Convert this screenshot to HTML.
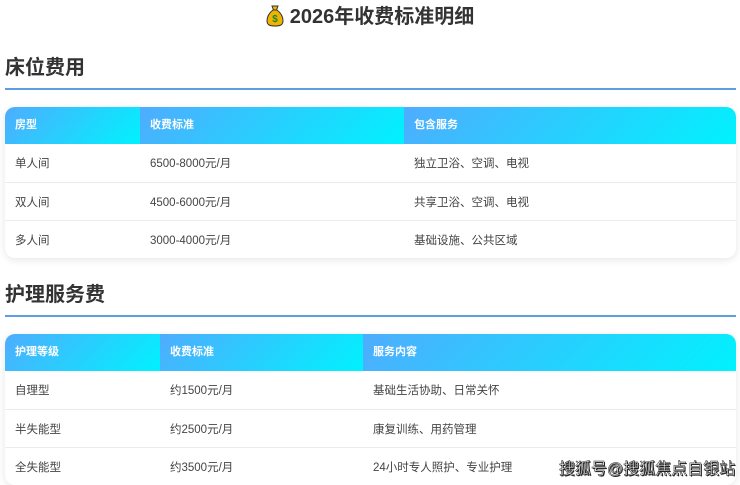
<!DOCTYPE html>
<html><head><meta charset="utf-8">
<style>
*{margin:0;padding:0;box-sizing:border-box}
body{width:740px;height:482px;overflow:hidden;background:#fff;font-family:"Liberation Sans","Noto Sans CJK SC",sans-serif;color:#333;position:relative}
.title{position:absolute;top:3px;left:0;width:740px;text-align:center;font-size:20px;font-weight:bold;color:#333;line-height:28px}
.title svg{vertical-align:-4px;margin-right:6px}
.h2{position:absolute;left:5px;font-size:20px;font-weight:bold;color:#333;line-height:28px}
.line{position:absolute;left:5px;width:731px;height:2px;background:#5b9fe2}
.tbl{position:absolute;left:5px;width:731px;border-radius:10px;overflow:hidden;box-shadow:0 2px 8px rgba(0,0,0,0.1);background:#fff}
.row{display:flex;height:38px;border-top:1px solid #ececf0;font-size:11.5px;align-items:center;color:#444}
.hdr{display:flex;height:37px;font-size:11px;font-weight:bold;color:#fff}
.hdr div{height:37px;line-height:37px;padding-left:10px;background:linear-gradient(135deg,#4facfe,#00f2fe)}
.row div{padding-left:10px}
.wm{position:absolute;left:559px;top:455px;font-size:16px;font-weight:normal;color:#fff;-webkit-text-stroke:0.5px #222;text-shadow:1px 1px 0 #222}
</style></head><body>
<div class="title"><svg width="18" height="22" viewBox="0 0 18 22"><path d="M6 1h6l-1.5 4h-3z" fill="#f0b400" stroke="#333" stroke-width="1"/><path d="M7 5h4c4 3 6 7 6 11 0 4-3 5-8 5s-8-1-8-5c0-4 2-8 6-11z" fill="#f0b400" stroke="#333" stroke-width="1"/><text x="9" y="17" font-size="10" font-weight="bold" text-anchor="middle" fill="#1a8a2a" font-family="Liberation Sans">$</text></svg>2026年收费标准明细</div>

<div class="h2" style="top:54px">床位费用</div>
<div class="line" style="top:88px"></div>
<div class="tbl" style="top:107px">
<div class="hdr"><div style="width:135px">房型</div><div style="width:264px">收费标准</div><div style="width:332px">包含服务</div></div>
<div class="row" style="border-top:none"><div style="width:135px">单人间</div><div style="width:264px">6500-8000元/月</div><div>独立卫浴、空调、电视</div></div>
<div class="row"><div style="width:135px">双人间</div><div style="width:264px">4500-6000元/月</div><div>共享卫浴、空调、电视</div></div>
<div class="row"><div style="width:135px">多人间</div><div style="width:264px">3000-4000元/月</div><div>基础设施、公共区域</div></div>
</div>

<div class="h2" style="top:281px">护理服务费</div>
<div class="line" style="top:315px"></div>
<div class="tbl" style="top:334px">
<div class="hdr"><div style="width:155px">护理等级</div><div style="width:203px">收费标准</div><div style="width:373px">服务内容</div></div>
<div class="row" style="border-top:none"><div style="width:155px">自理型</div><div style="width:203px">约1500元/月</div><div>基础生活协助、日常关怀</div></div>
<div class="row"><div style="width:155px">半失能型</div><div style="width:203px">约2500元/月</div><div>康复训练、用药管理</div></div>
<div class="row"><div style="width:155px">全失能型</div><div style="width:203px">约3500元/月</div><div>24小时专人照护、专业护理</div></div>
</div>
<div class="wm">搜狐号@搜狐焦点自银站</div>
</body></html>
